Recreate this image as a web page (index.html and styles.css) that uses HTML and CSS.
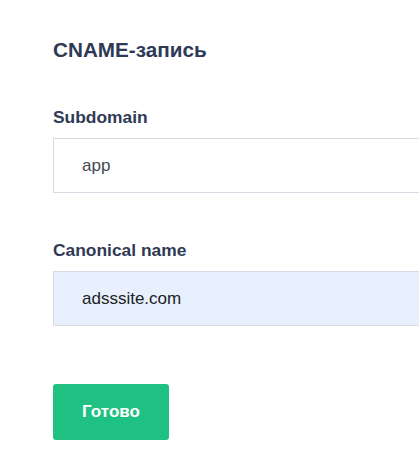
FILE: index.html
```html
<!DOCTYPE html>
<html lang="ru">
<head>
<meta charset="utf-8">
<link rel="stylesheet" href="styles.css">
</head>
<body>
<div class="page">
  <h2 class="title">CNAME-запись</h2>
  <div class="field">
    <label class="label">Subdomain</label>
    <div class="input">app</div>
  </div>
  <div class="field">
    <label class="label">Canonical name</label>
    <div class="input input-filled">adsssite.com</div>
  </div>
  <button class="btn">Готово</button>
</div>
</body>
</html>
```

FILE: styles.css
```css
html, body {
  margin: 0;
  padding: 0;
  background: #fff;
}
.page {
  padding: 38px 0 0 53px;
  font-family: "Liberation Sans", Arial, sans-serif;
}
.title {
  margin: 0 0 45px 0;
  font-size: 20.7px;
  font-weight: 700;
  color: #2e3a55;
  line-height: 24px;
}
.field {
  margin-bottom: 47px;
}
.field:last-of-type {
  margin-bottom: 58px;
}
.label {
  display: block;
  font-size: 17.4px;
  font-weight: 700;
  color: #2e3a55;
  line-height: 20px;
  margin-bottom: 11px;
}
.input {
  box-sizing: border-box;
  height: 55px;
  border: 1px solid #d6dbe5;
  border-right: none;
  padding: 0 0 0 28px;
  display: flex;
  align-items: center;
  font-size: 17px;
  color: #454a55;
}
.input-filled {
  background: #e8f0fe;
  color: #222;
}
.btn {
  display: block;
  width: 116px;
  height: 56px;
  border: none;
  border-radius: 3px;
  background: #1fc182;
  color: #fff;
  font-family: "Liberation Sans", Arial, sans-serif;
  font-size: 17px;
  font-weight: 700;
  padding: 0;
}
```
